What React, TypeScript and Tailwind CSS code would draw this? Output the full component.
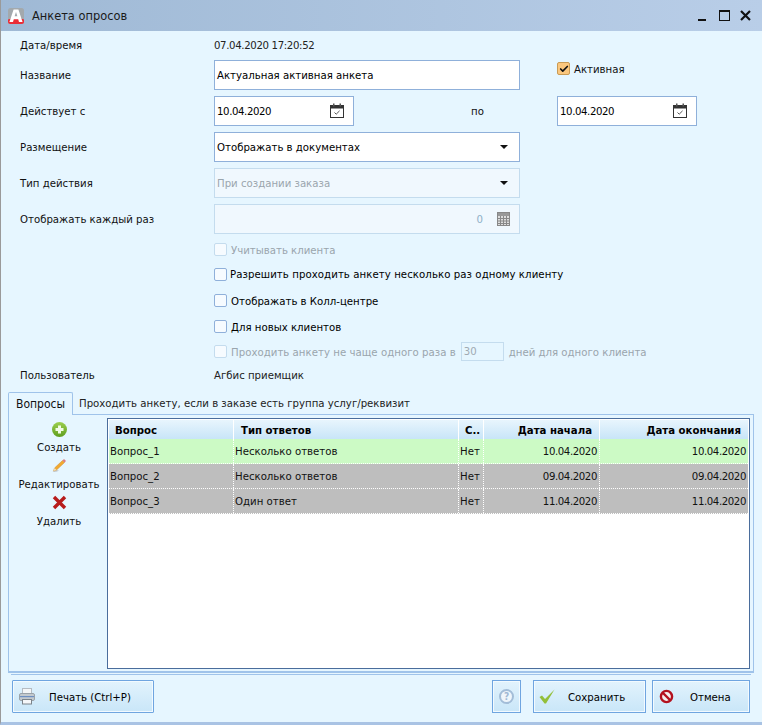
import React from 'react';
import { Check } from 'lucide-react';

const font = { fontFamily: '"DejaVu Sans Condensed", "Noto Sans", sans-serif' };

const CalendarIcon = () => (
  <svg width="14" height="15" viewBox="0 0 14 15" fill="none" className="shrink-0">
    <rect x="0.5" y="2.5" width="13" height="12" fill="#fff" stroke="#333" />
    <rect x="0.5" y="2.5" width="13" height="2.5" fill="#333" stroke="#333" />
    <rect x="3" y="0.5" width="1.5" height="3" fill="#555" />
    <rect x="9.5" y="0.5" width="1.5" height="3" fill="#555" />
    <path d="M4.5 9.5 L6.2 11.2 L9.6 7.8" stroke="#555" strokeWidth="1" />
  </svg>
);

const Caret = () => (
  <svg width="8" height="4" viewBox="0 0 8 4" className="shrink-0">
    <path d="M0 0 H8 L4 4 Z" fill="#111" />
  </svg>
);

const CalcIcon = () => (
  <svg width="13" height="14" viewBox="0 0 13 14" className="shrink-0">
    <rect x="0.5" y="0.5" width="12" height="13" fill="#ddd" stroke="#888" />
    <rect x="1" y="1" width="11" height="3" fill="#999" />
    <path d="M1 6.5H12M1 9H12M1 11.5H12M3.5 4V13M6.5 4V13M9.5 4V13" stroke="#888" strokeWidth="1" />
  </svg>
);

const Logo = () => (
  <svg width="16" height="16" viewBox="0 0 16 16">
    <rect x="0" y="0" width="16" height="16" rx="2.5" fill="#a3a9ad" />
    <path d="M0 11.5 Q8 8 16 11.5 V13.5 A2.5 2.5 0 0 1 13.5 16 H2.5 A2.5 2.5 0 0 1 0 13.5 Z" fill="#ea2d36" />
    <path d="M5.6 1.5 H10.4 L14.6 14 H11 L10.2 11.2 H5.8 L5 14 H1.4 Z M6.6 8.2 H9.4 L8 4 Z" fill="#fff" fillRule="evenodd" />
  </svg>
);

const CheckRow = ({ label, disabled = false, h, gap = 'gap-[4px]', cls = '' }: { label: string; disabled?: boolean; h: string; gap?: string; cls?: string }) => (
  <div className={`flex items-center shrink-0 pl-[213px] ${h} ${gap}`}>
    <span className={`w-[13px] h-[13px] rounded-[2px] border bg-[#f6fbff] ${disabled ? 'border-[#c4dcee]' : 'border-[#8fb0da]'}`} />
    <span className={`pt-[2px] ${disabled ? 'text-[#9aa5ad]' : 'text-black'} ${cls}`}>{label}</span>
  </div>
);

const Label = ({ children }: { children: React.ReactNode }) => (
  <span className="w-[194px] shrink-0 pl-[19px] pt-[2px]">{children}</span>
);

const rows = [
  { q: 'Вопрос_1', t: 'Несколько ответов', s: 'Нет', a: '10.04.2020', b: '10.04.2020', bg: 'bg-[#ccfac5]' },
  { q: 'Вопрос_2', t: 'Несколько ответов', s: 'Нет', a: '09.04.2020', b: '09.04.2020', bg: 'bg-[#bebebe]' },
  { q: 'Вопрос_3', t: 'Один ответ', s: 'Нет', a: '11.04.2020', b: '11.04.2020', bg: 'bg-[#bebebe]' },
];

const App: React.FC = () => {
  return (
    <div style={font} className="w-[762px] h-[725px] bg-[#e6f6ff] text-[11.3px] leading-[16px] text-[#111] flex flex-col overflow-hidden border-l border-[#9a9a9a] border-b-[3px] border-b-[#a9c3e4]">
      {/* Title bar */}
      <div className="h-[31px] shrink-0 flex items-center bg-gradient-to-r from-[#9fb9d5] to-[#b9cee8] -ml-px pl-[8px] pr-[11px]">
        <Logo />
        <span className="ml-[8px] text-[12.7px] text-[#1a1a1a]">Анкета опросов</span>
        <div className="ml-auto flex items-center">
          <span className="w-[8px] h-[2px] bg-[#111] mt-[9px]" />
          <span className="ml-[13px] w-[11px] h-[11px] border border-t-[2px] border-[#111]" />
          <svg width="11" height="11" viewBox="0 0 11 11" className="ml-[10px]">
            <path d="M1 1 L10 10 M10 1 L1 10" stroke="#111" strokeWidth="2.2" />
          </svg>
        </div>
      </div>

      {/* Form */}
      <div className="h-[28px] flex items-center shrink-0">
        <Label>Дата/время</Label>
        <span className="ml-[19px] pt-[2px] text-[#222] tracking-[-0.35px]">07.04.2020 17:20:52</span>
      </div>
      <div className="h-[31px] flex items-center shrink-0">
        <Label>Название</Label>
        <div className="ml-[19px] w-[306px] h-[30px] bg-white border border-[#8fb0da] flex items-center pl-[2px] text-black">
          <span className="pt-[2px]">Актуальная активная анкета</span>
        </div>
        <div className="ml-[37px] flex items-center gap-[4px] -mt-[12px]">
          <span className="w-[13px] h-[13px] rounded-[2px] border border-[#c99b55] bg-[#fbc77e] flex items-center justify-center">
            <Check size={10} strokeWidth={4} color="#111" />
          </span>
          <span className="pt-[2px]">Активная</span>
        </div>
      </div>
      <div className="h-[36px] flex items-center shrink-0 pt-[5px]">
        <Label>Действует с</Label>
        <div className="ml-[19px] w-[140px] h-[30px] bg-white border border-[#8fb0da] flex items-center justify-between pl-[2px] pr-[9px] text-black tracking-[-0.4px]">
          <span className="pt-[2px]">10.04.2020</span> <CalendarIcon />
        </div>
        <span className="ml-[117px] w-[86px] pt-[2px]">по</span>
        <div className="w-[140px] h-[30px] bg-white border border-[#8fb0da] flex items-center justify-between pl-[2px] pr-[9px] text-black tracking-[-0.4px]">
          <span className="pt-[2px]">10.04.2020</span> <CalendarIcon />
        </div>
      </div>
      <div className="h-[36px] flex items-center shrink-0 pt-[6px]">
        <Label>Размещение</Label>
        <div className="ml-[19px] w-[306px] h-[30px] bg-white border border-[#8fb0da] flex items-center justify-between pl-[2px] pr-[11px] text-black">
          <span className="pt-[2px]">Отображать в документах</span> <Caret />
        </div>
      </div>
      <div className="h-[36px] flex items-center shrink-0 pt-[6px]">
        <Label>Тип действия</Label>
        <div className="ml-[19px] w-[306px] h-[30px] bg-[#f0f8fe] border border-[#c4dcee] flex items-center justify-between pl-[2px] pr-[11px] text-[#9aa5ad]">
          <span className="pt-[2px]">При создании заказа</span> <Caret />
        </div>
      </div>
      <div className="h-[36px] flex items-center shrink-0 pt-[6px]">
        <Label>Отображать каждый раз</Label>
        <div className="ml-[19px] w-[306px] h-[30px] bg-[#f0f8fe] border border-[#c4dcee] flex items-center justify-end gap-[14px] pr-[9px] text-[#8fb0c8]">
          <span className="pt-[2px]">0</span> <CalcIcon />
        </div>
      </div>

      <CheckRow label="Учитывать клиента" disabled h="h-[26px] pt-[5px]" />
      <CheckRow label="Разрешить проходить анкету несколько раз одному клиенту" h="h-[28px]" gap="gap-[3px]" cls="tracking-[0.07px]" />
      <CheckRow label="Отображать в Колл-центре" h="h-[25px]" />
      <CheckRow label="Для новых клиентов" h="h-[27px]" />
      <div className="h-[23px] flex items-center pl-[213px] gap-[4px] text-[#9aa5ad] shrink-0">
        <span className="w-[13px] h-[13px] rounded-[2px] border border-[#c4dcee] bg-[#f6fbff]" />
        <span className="pt-[2px] tracking-[0.03px]">Проходить анкету не чаще одного раза в</span>
        <span className="ml-[1px] w-[43px] h-[19px] border border-[#c4dcee] pl-[2px] flex items-center text-[#a0aab2]">30</span>
        <span className="ml-[1px] pt-[2px]">дней для одного клиента</span>
      </div>
      <div className="h-[24px] flex items-center shrink-0">
        <Label>Пользователь</Label>
        <span className="ml-[19px] pt-[2px] text-[#222]">Агбис приемщик</span>
      </div>

      {/* Tabs */}
      <div className="h-[22px] ml-[7px] mr-[8px] flex items-end shrink-0 mt-[5px] relative">
        <div className="h-[23px] w-[65px] text-[12px] bg-[#e6f6ff] border border-b-0 border-[#9fc3ea] rounded-t-[2px] flex items-center justify-center relative z-10 -mb-px">Вопросы</div>
        <span className="ml-[6px] h-[21px] flex items-center text-[#222]">Проходить анкету, если в заказе есть группа услуг/реквизит</span>
      </div>
      <div className="h-[259px] ml-[7px] mr-[8px] border border-[#9fc3ea] border-b-[2px] shrink-0 flex pt-[3px] pr-[3px] pb-[2px]">
        <div className="w-[98px] shrink-0 flex flex-col items-center pt-[4px] pl-[2px]">
          <svg width="15" height="15" viewBox="0 0 15 15">
            <defs>
              <linearGradient id="plusFill" x1="0" y1="0" x2="0" y2="1">
                <stop offset="0" stopColor="#9ccf4f" />
                <stop offset="1" stopColor="#5f9e1e" />
              </linearGradient>
            </defs>
            <circle cx="7.5" cy="7.5" r="7.5" fill="url(#plusFill)" />
            <path d="M6 3.5 H9 V6 H11.5 V9 H9 V11.5 H6 V9 H3.5 V6 H6 Z" fill="#f2fbe6" />
          </svg>
          <span className="mt-[2px] leading-[18px] h-[18px]">Создать</span>
          <svg width="15" height="15" viewBox="0 0 15 15" className="mt-[1px]">
            <path d="M0.5 14 Q3 11.5 7 12.5 L5 13.5 Z" fill="#b9c0c6" />
            <path d="M1.5 13 L2.5 10 L10.5 2.5 L12.5 4.5 L4.5 12 Z" fill="#f2a92f" stroke="#c98a30" strokeWidth="0.5" />
            <path d="M10.5 2.5 L12 1 L14 3 L12.5 4.5 Z" fill="#dd7c84" />
            <path d="M1.5 13 L2.5 10 L4.5 12 Z" fill="#efe0c2" />
          </svg>
          <span className="mt-[3px] leading-[18px] h-[18px]">Редактировать</span>
          <svg width="15" height="15" viewBox="0 0 15 15" className="mt-[1px]">
            <path d="M2 2 L13 13 M13 2 L2 13" stroke="#b71c1c" strokeWidth="3.4" />
          </svg>
          <span className="mt-[3px] leading-[18px] h-[18px]">Удалить</span>
        </div>
        <div className="flex-1 border border-[#4a6d9c] bg-white pt-px pl-px pr-px">
          <div className="flex h-[19px] font-bold text-black">
            <div className="w-[125px] border-r border-white bg-gradient-to-b from-[#e8f5fd] to-[#c8e5f8] pl-[6px] pt-[2px] flex items-center">Вопрос</div>
            <div className="w-[225px] border-r border-white bg-gradient-to-b from-[#e8f5fd] to-[#c8e5f8] pl-[7px] pt-[2px] flex items-center">Тип ответов</div>
            <div className="w-[25px] border-r border-white bg-gradient-to-b from-[#e8f5fd] to-[#c8e5f8] pl-[6px] pt-[2px] flex items-center">С..</div>
            <div className="w-[116px] border-r border-white bg-gradient-to-b from-[#e8f5fd] to-[#c8e5f8] pr-[7px] pt-[2px] flex items-center justify-end">Дата начала</div>
            <div className="flex-1 bg-gradient-to-b from-[#e8f5fd] to-[#c8e5f8] pr-[7px] pt-[2px] flex items-center justify-end">Дата окончания</div>
          </div>
          {rows.map((r) => (
            <div key={r.q} className={`flex h-[25px] text-[#111] border-b border-dotted border-white ${r.bg}`}>
              <div className="w-[125px] border-r border-dotted border-white pl-[1px] pt-[2px] flex items-center">{r.q}</div>
              <div className="w-[225px] border-r border-dotted border-white pl-[1px] pt-[2px] flex items-center">{r.t}</div>
              <div className="w-[25px] border-r border-dotted border-white pl-[1px] pt-[2px] flex items-center">{r.s}</div>
              <div className="w-[116px] border-r border-dotted border-white pr-[2px] pt-[2px] flex items-center justify-end tracking-[-0.4px]">{r.a}</div>
              <div className="flex-1 pr-[2px] pt-[2px] flex items-center justify-end tracking-[-0.4px]">{r.b}</div>
            </div>
          ))}
        </div>
      </div>
      <div className="h-px ml-[10px] mr-[11px] mt-[1px] bg-[#9fc3ea] shrink-0" />

      {/* Footer */}
      <div className="flex items-start pl-[11px] pr-[12px] pt-[5px] shrink-0">
        <button className="w-[142px] h-[33px] border border-[#6fa5e0] shadow-[inset_0_0_0_1px_#f2faff] bg-gradient-to-b from-[#e2f3fd] to-[#c9e6f8] flex items-center pl-[6px] rounded-[1px]">
          <svg width="16" height="17" viewBox="0 0 16 17">
            <rect x="3.5" y="0.5" width="9" height="6" fill="#f4f6f8" stroke="#b5bcc3" />
            <rect x="0.5" y="5.5" width="15" height="7" rx="1.5" fill="#c3c9ce" stroke="#9aa2a9" />
            <rect x="1" y="8" width="14" height="1.2" fill="#6d8fc2" />
            <rect x="3.5" y="11.5" width="9" height="4.5" fill="#f5f7f9" stroke="#7b838a" />
          </svg>
          <span className="ml-[14px] pt-[2px] text-black">Печать (Ctrl+P)</span>
        </button>
        <button className="ml-auto w-[29px] h-[33px] border border-[#6fa5e0] shadow-[inset_0_0_0_1px_#f2faff] bg-gradient-to-b from-[#e2f3fd] to-[#c9e6f8] flex items-center justify-center">
          <span className="w-[15px] h-[15px] rounded-full border-2 border-[#a3bdd8] bg-[#eef5fb] text-[10px] leading-none font-bold text-[#9fb8d4] flex items-center justify-center">?</span>
        </button>
        <button className="ml-[12px] w-[113px] h-[33px] border border-[#6fa5e0] shadow-[inset_0_0_0_1px_#f2faff] bg-gradient-to-b from-[#e2f3fd] to-[#c9e6f8] flex items-center pl-[5px]">
          <svg width="17" height="15" viewBox="0 0 17 15">
            <path d="M0.5 8 L3 6.5 L6 10 L15.5 0.5 L7 14.5 L5.5 14.5 Z" fill="#93bf3a" />
          </svg>
          <span className="ml-[12px] pt-[2px] text-black">Сохранить</span>
        </button>
        <button className="ml-[6px] w-[98px] h-[33px] border border-[#6fa5e0] shadow-[inset_0_0_0_1px_#f2faff] bg-gradient-to-b from-[#e2f3fd] to-[#c9e6f8] flex items-center pl-[6px]">
          <svg width="15" height="15" viewBox="0 0 15 15">
            <circle cx="7.5" cy="7.5" r="5.6" fill="#f4f0f0" stroke="#b3121f" strokeWidth="2.4" />
            <path d="M3.5 3.5 L11.5 11.5" stroke="#b3121f" strokeWidth="2.4" />
          </svg>
          <span className="ml-[16px] pt-[2px] text-black">Отмена</span>
        </button>
      </div>
    </div>
  );
};

export default App;
